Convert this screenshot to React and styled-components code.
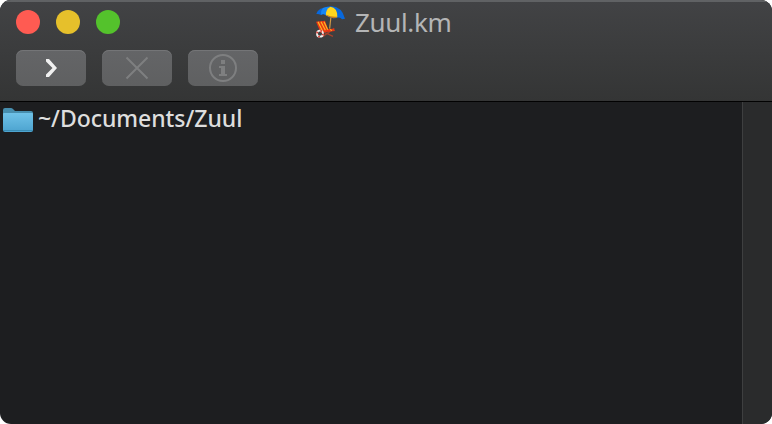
import styled, { createGlobalStyle } from 'styled-components';

const GlobalStyle = createGlobalStyle`
  body {
    margin: 0;
    background: #fff;
  }

  * {
    box-sizing: border-box;
  }
`;

const Window = styled.div`
  display: flex;
  flex-direction: column;
  width: 772px;
  height: 424px;
  border-radius: 11px;
  overflow: hidden;
  background: #1d1e20;
  font-family: 'Noto Sans', sans-serif;
`;

const Header = styled.header`
  flex: none;
  height: 102px;
  background: linear-gradient(#424345, #343535);
  border-bottom: 1px solid #020202;
  box-shadow: inset 0 2px #606264;
`;

const TitleBar = styled.div`
  display: grid;
  grid-template-columns: 299px auto 1fr;
  height: 44px;
  padding: 0 16px;
`;

const Lights = styled.div`
  display: flex;
  gap: 16px;
  padding-top: 10px;
`;

const Light = styled.span`
  width: 24px;
  height: 24px;
  border-radius: 50%;
  background: ${props => props.$color};
`;

const Title = styled.div`
  display: flex;
  align-items: flex-start;
  gap: 8px;
  padding-top: 4px;
  color: #b4b5b6;
`;

const TitleText = styled.span`
  font-size: 26px;
  line-height: 36px;
  letter-spacing: -0.35px;
  white-space: nowrap;
`;

const Toolbar = styled.div`
  display: flex;
  gap: 16px;
  padding: 6px 16px 0;
`;

const ToolButton = styled.button`
  display: flex;
  align-items: center;
  justify-content: center;
  width: 70px;
  height: 36px;
  padding: 0;
  border: 0;
  border-radius: 7px;
  background: linear-gradient(#646567, #5f6061);
  box-shadow: inset 0 1px #747577;
  color: ${props => (props.$active ? '#f0f0f0' : '#7e7f80')};
`;

const Content = styled.main`
  display: flex;
  flex: 1;
`;

const Console = styled.div`
  flex: 1;
  padding: 1px 3px;
`;

const Gutter = styled.div`
  width: 30px;
  background: #2a2b2c;
  border-left: 1px solid #3e3f40;
`;

const Row = styled.div`
  display: flex;
  align-items: flex-start;
  gap: 5px;
  height: 30px;
  color: #dedede;
`;

const FolderSvg = styled.svg`
  margin-top: 4px;
`;

const Path = styled.span`
  font-size: 23px;
  font-weight: 500;
  line-height: 30px;
  letter-spacing: -0.05px;
  white-space: nowrap;
`;

const BeachIcon = () => (
  <svg width="32" height="36" viewBox="30 12 96 108">
    <path d="M78 48 L74 86" stroke="#d49a45" strokeWidth="3.5" />
    <path d="M88 85 L54 109 M54 95 L84 109" stroke="#a3422c" strokeWidth="4" />
    <path d="M34 42 Q38 28 54 24 Q65 19 80 19 Q111 21 120 56 L111 58 Q106 50 97 53 Q83 58 65 48 Q56 40 48 45 Q41 41 34 42Z" fill="#0868dc" />
    <path d="M54 24 Q65 20 76 20 Q61 28 63 46 Q56 39 48 44 Q47 31 54 24Z" fill="#1687f5" />
    <path d="M76 20 Q98 23 97 51 Q82 56 63 46 Q61 28 76 20Z" fill="#ffd51c" />
    <path d="M63 44 Q78 52 97 50 L95 53 Q78 58 63 46Z" fill="#c77916" />
    <path d="M33 65 L60 62 L69 87 L87 86 L90 93 L47 98Z" fill="#e93615" />
    <path d="M39 65 L53 94 M48 65 L61 91 M57 65 L68 89 M76 88 L80 92" stroke="#ffb820" strokeWidth="3.5" />
    <circle cx="45" cy="101" r="9" fill="none" stroke="#efeceb" strokeWidth="5.5" />
    <circle cx="45" cy="101" r="9" fill="none" stroke="#dc3b32" strokeWidth="5.5" strokeDasharray="5 9.14" />
  </svg>
);

const ChevronIcon = () => (
  <svg width="14" height="20" viewBox="0 0 14 20">
    <path d="M2 1 H5 L13 10 L5 19 H2 V16.5 L8.5 10 L2 3.5Z" fill="currentColor" />
  </svg>
);

const CloseIcon = () => (
  <svg width="24" height="24" viewBox="0 0 24 24">
    <path d="M1.5 1.5 L22.5 22.5 M22.5 1.5 L1.5 22.5" fill="none" stroke="currentColor" strokeWidth="2" />
  </svg>
);

const InfoIcon = () => (
  <svg width="30" height="30" viewBox="0 0 30 30">
    <circle cx="15" cy="15" r="13" fill="none" stroke="currentColor" strokeWidth="2" />
    <path d="M13 7h4v4h-4z M11 13h6v8h2v2h-8v-2h2v-6h-2z" fill="currentColor" />
  </svg>
);

const FolderIcon = () => (
  <FolderSvg width="30" height="26" viewBox="0 0 30 26">
    <defs>
      <linearGradient id="folder" x1="0" y1="0" x2="0" y2="1">
        <stop offset="0" stopColor="#6fc2e8" />
        <stop offset="1" stopColor="#4ca3cf" />
      </linearGradient>
    </defs>
    <path d="M0 3 Q0 1 2 1 H8 Q9 1 10 2 L12 4 H28 Q30 4 30 6 V10 H0Z" fill="#478eae" />
    <path d="M0 7 Q0 6 1 6 H29 Q30 6 30 7 V23 Q30 25 28 25 H2 Q0 25 0 23Z" fill="url(#folder)" />
    <path d="M0 23.5 H30" stroke="#398bb2" strokeWidth="1" />
  </FolderSvg>
);

export default function App() {
  return (
    <>
      <GlobalStyle />
      <Window>
        <Header>
          <TitleBar>
            <Lights>
              <Light $color="#ff5b52" />
              <Light $color="#e6c02b" />
              <Light $color="#54c22c" />
            </Lights>
            <Title>
              <BeachIcon />
              <TitleText>Zuul.km</TitleText>
            </Title>
          </TitleBar>
          <Toolbar>
            <ToolButton $active aria-label="Run">
              <ChevronIcon />
            </ToolButton>
            <ToolButton disabled aria-label="Stop">
              <CloseIcon />
            </ToolButton>
            <ToolButton disabled aria-label="Info">
              <InfoIcon />
            </ToolButton>
          </Toolbar>
        </Header>
        <Content>
          <Console>
            <Row>
              <FolderIcon />
              <Path>~/Documents/Zuul</Path>
            </Row>
          </Console>
          <Gutter />
        </Content>
      </Window>
    </>
  );
}
